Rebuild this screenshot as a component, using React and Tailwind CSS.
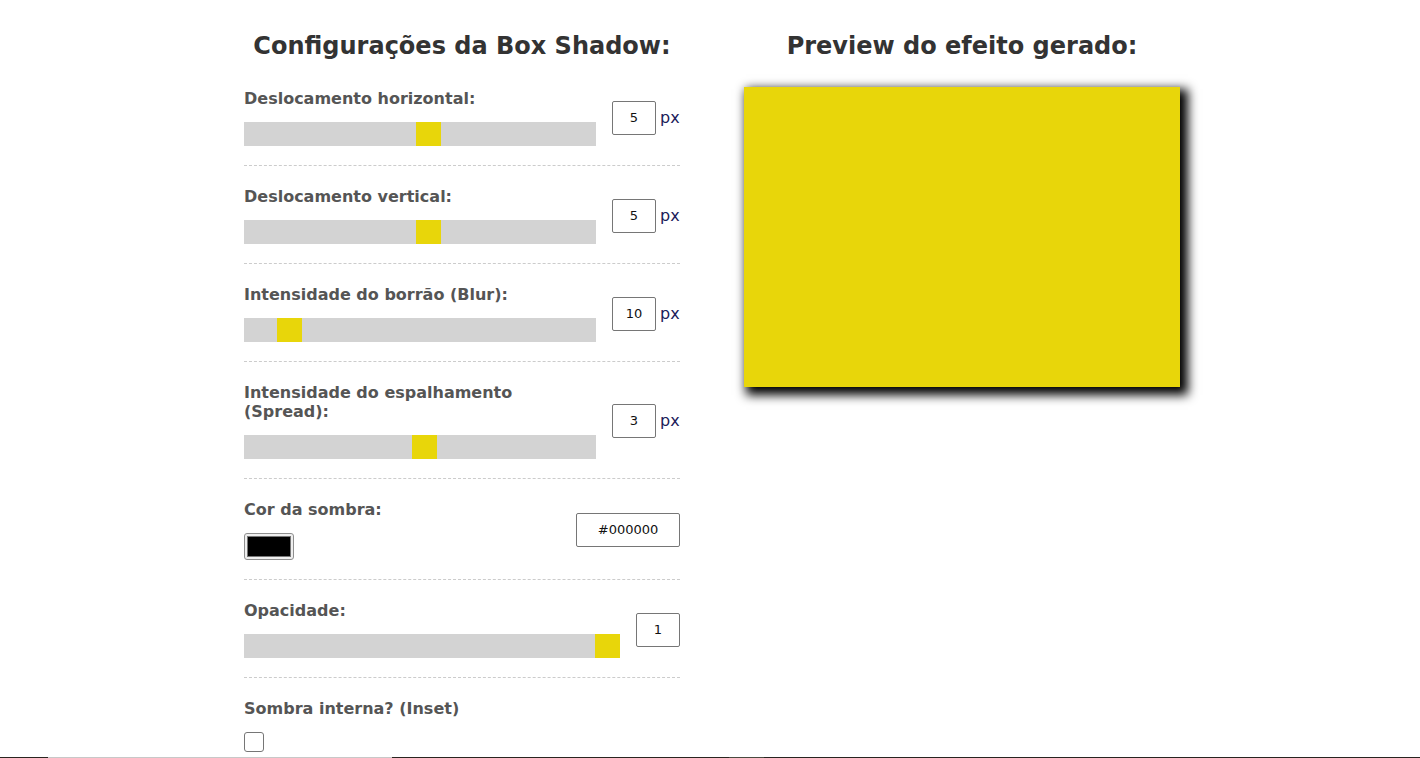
import React from "react";

const YELLOW = "#e8d60a";

function Slider({ value, min, max, width }) {
  const frac = (value - min) / (max - min);
  const left = Math.round((width - 25) * frac);
  return (
    <div className="relative h-[24px] bg-[#d3d3d3]" style={{ width }}>
      <div
        className="absolute top-0 h-[24px] w-[25px] bg-[#e8d60a]"
        style={{ left }}
      />
    </div>
  );
}

function Label({ children }) {
  return (
    <div className="text-[16px] leading-[19px] font-bold text-[#555555] mb-[14px]">
      {children}
    </div>
  );
}

function NumBox({ value, w = "w-[44px]" }) {
  return (
    <div
      className={`${w} h-[34px] border border-[#767676] rounded-[2px] flex items-center justify-center text-[13px] text-[#111111] bg-white`}
    >
      {value}
    </div>
  );
}

function Row({ children, last }) {
  return (
    <div
      className={`flex items-center gap-[16px] pt-[21px] ${
        last ? "" : "pb-[19px] border-b border-dashed border-[#cccccc]"
      }`}
    >
      {children}
    </div>
  );
}

function PxRow({ label, value, min, max }) {
  return (
    <Row>
      <div className="w-[352px]">
        <Label>{label}</Label>
        <Slider value={value} min={min} max={max} width={352} />
      </div>
      <div className="flex items-center gap-[4px]">
        <NumBox value={value} />
        <span className="text-[16px] text-[#20205a]">px</span>
      </div>
    </Row>
  );
}

export default function App() {
  return (
    <div
      className="w-[1420px] bg-white"
      style={{ fontFamily: '"DejaVu Sans", Verdana, sans-serif' }}
    >
      <div className="h-[757px] overflow-hidden">
        <div className="flex justify-center gap-[64px] pt-[32px] pl-[4px]">
          {/* Left column */}
          <div className="w-[436px]">
            <h2 className="text-[24px] leading-[28px] font-bold text-[#333333] text-center mb-[8px]">
              Configurações da Box Shadow:
            </h2>
            <PxRow label="Deslocamento horizontal:" value={5} min={-100} max={100} />
            <PxRow label="Deslocamento vertical:" value={5} min={-100} max={100} />
            <PxRow label="Intensidade do borrão (Blur):" value={10} min={0} max={100} />
            <PxRow label="Intensidade do espalhamento (Spread):" value={3} min={-100} max={100} />
            <Row>
              <div className="flex-1">
                <Label>Cor da sombra:</Label>
                <div className="w-[50px] h-[27px] border border-[#8f8f8f] rounded-[3px] bg-[#efefef] p-[2px]">
                  <div className="w-full h-full bg-black border border-[#777777]" />
                </div>
              </div>
              <div className="w-[104px] h-[34px] border border-[#767676] rounded-[2px] flex items-center justify-center text-[13px] text-[#111111]">
                #000000
              </div>
            </Row>
            <Row>
              <div className="flex-1">
                <Label>Opacidade:</Label>
                <Slider value={1} min={0} max={1} width={376} />
              </div>
              <NumBox value={1} />
            </Row>
            <Row last>
              <div className="flex-1">
                <Label>Sombra interna? (Inset)</Label>
                <div className="w-[20px] h-[20px] border border-[#767676] rounded-[3px] bg-white" />
              </div>
            </Row>
          </div>

          {/* Right column */}
          <div className="w-[436px]">
            <h2 className="text-[24px] leading-[28px] font-bold text-[#333333] text-center mb-[27px]">
              Preview do efeito gerado:
            </h2>
            <div
              className="w-[436px] h-[300px] bg-[#e8d60a] shadow-[5px_5px_10px_3px_#000000]"
            />
          </div>
        </div>
      </div>
      <div className="flex h-[1px]">
        <div className="w-[48px] bg-[#2a2520]" />
        <div className="w-[344px] bg-[#c8c8c8]" />
        <div className="w-[337px] bg-[#2a2520]" />
        <div className="w-[35px] bg-[#4a4a40]" />
        <div className="flex-1 bg-[#282420]" />
      </div>
    </div>
  );
}
